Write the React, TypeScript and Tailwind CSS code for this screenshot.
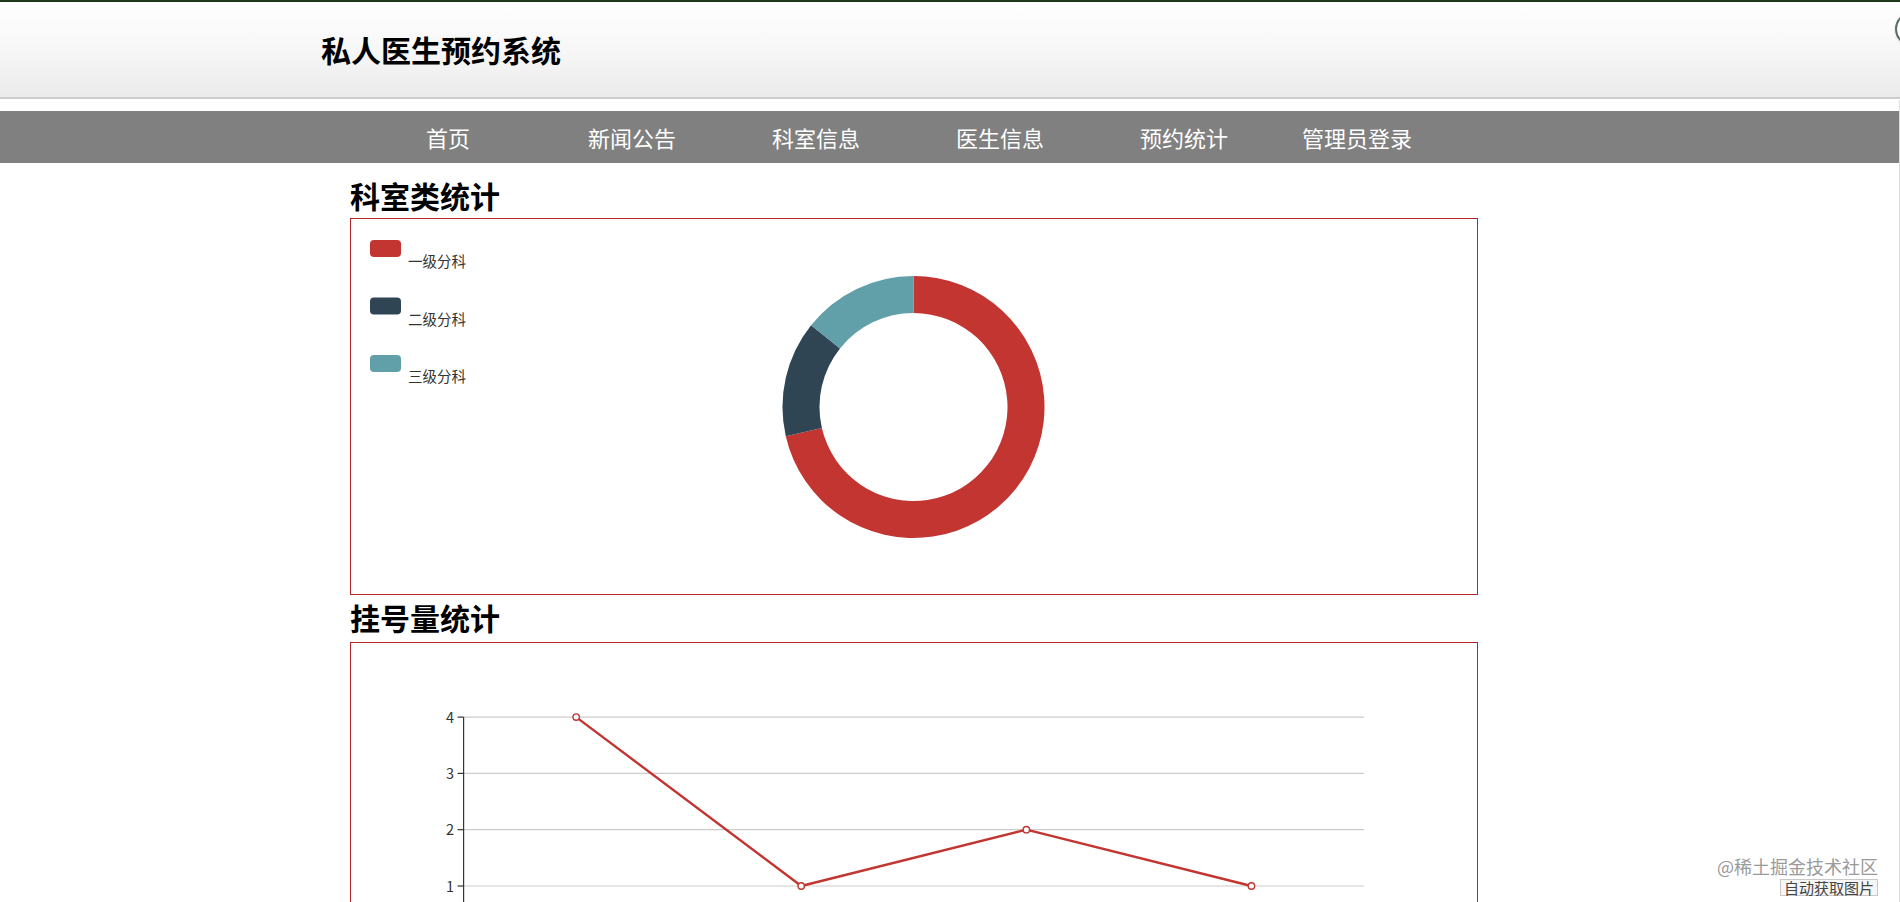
import React from "react";

const NAV = [
  { label: "首页", w: "w-[184px]" },
  { label: "新闻公告", w: "w-[184px]" },
  { label: "科室信息", w: "w-[184px]" },
  { label: "医生信息", w: "w-[184px]" },
  { label: "预约统计", w: "w-[184px]" },
  { label: "管理员登录", w: "w-[162px]" },
];

const PIE = [
  { name: "一级分科", value: 5, color: "#c23531" },
  { name: "二级分科", value: 1, color: "#2f4554" },
  { name: "三级分科", value: 1, color: "#61a0a8" },
];

const LINE = [4, 1, 2, 1];

const FONT = "'Noto Sans CJK SC', 'Liberation Sans', sans-serif";

// angle in degrees, measured clockwise from 12 o'clock
function pt(cx: number, cy: number, rad: number, a: number) {
  const t = (a * Math.PI) / 180;
  return `${(cx + rad * Math.sin(t)).toFixed(2)} ${(cy - rad * Math.cos(t)).toFixed(2)}`;
}

function ringSlice(cx: number, cy: number, R: number, r: number, a0: number, a1: number) {
  const large = a1 - a0 > 180 ? 1 : 0;
  return [
    `M ${pt(cx, cy, R, a0)}`,
    `A ${R} ${R} 0 ${large} 1 ${pt(cx, cy, R, a1)}`,
    `L ${pt(cx, cy, r, a1)}`,
    `A ${r} ${r} 0 ${large} 0 ${pt(cx, cy, r, a0)}`,
    "Z",
  ].join(" ");
}

function DeptChart() {
  const total = PIE.reduce((s, d) => s + d.value, 0);
  let acc = 0;
  const slices = PIE.map((d) => {
    const a0 = (acc / total) * 360;
    acc += d.value;
    const a1 = (acc / total) * 360;
    return { ...d, path: ringSlice(562.5, 188, 131, 94, a0, a1) };
  });
  return (
    <svg width="1126" height="375" className="block">
      {PIE.map((d, i) => (
        <g key={d.name}>
          <rect x="19" y={21 + i * 57.5} width="31" height="17" rx="4" fill={d.color} />
          <text
            x="57"
            y={41.5 + i * 57.5}
            fontSize="14.5"
            fill="#333"
            dominantBaseline="central"
            fontFamily={FONT}
          >
            {d.name}
          </text>
        </g>
      ))}
      {slices.map((s) => (
        <path key={s.name} d={s.path} fill={s.color} />
      ))}
    </svg>
  );
}

function RegisterChart() {
  const left = 112.6;
  const right = 1013;
  const base = 299.3;
  const step = 56.3;
  const band = (right - left) / LINE.length;
  const yFor = (v: number) => base - v * step;
  const xFor = (i: number) => left + band / 2 + i * band;
  const points = LINE.map((v, i) => `${xFor(i)},${yFor(v)}`).join(" ");
  return (
    <svg width="1126" height="375" className="block">
      {[1, 2, 3, 4].map((v) => (
        <g key={v}>
          <line x1={left} x2={right} y1={yFor(v)} y2={yFor(v)} stroke="#cccccc" strokeWidth="1.2" />
          <line x1={left - 6} x2={left} y1={yFor(v)} y2={yFor(v)} stroke="#333" strokeWidth="1.2" />
          <text
            x="103"
            y={yFor(v) - 1}
            fontSize="14.5"
            fill="#333"
            textAnchor="end"
            dominantBaseline="central"
            fontFamily={FONT}
          >
            {v}
          </text>
        </g>
      ))}
      <line x1={left} x2={left} y1={yFor(4)} y2={base} stroke="#333" strokeWidth="1.2" />
      <line x1={left} x2={right} y1={base} y2={base} stroke="#333" strokeWidth="1.2" />
      <polyline points={points} fill="none" stroke="#c23531" strokeWidth="2.4" strokeLinejoin="round" />
      {LINE.map((v, i) => (
        <circle key={i} cx={xFor(i)} cy={yFor(v)} r="3.2" fill="#fff" stroke="#c23531" strokeWidth="1.4" />
      ))}
    </svg>
  );
}

export default function App() {
  return (
    <div className="relative h-[902px] overflow-hidden bg-white font-['Noto_Sans_CJK_SC','Liberation_Sans',sans-serif] text-black">
      <div className="h-[2px] bg-[#1d3b1a]" />
      <header className="flex h-[97px] items-center border-b-2 border-[#cdcdcd] bg-linear-to-b from-white via-[#f7f7f7] to-[#ebebeb] pl-[321px] pb-[1px]">
        <h1 className="text-[30px] font-bold leading-none">私人医生预约系统</h1>
      </header>

      <nav className="mt-[12px] flex h-[52px] items-center bg-[#808080] pl-[356px]">
        {NAV.map((n) => (
          <a key={n.label} className={`${n.w} text-center text-[22px] leading-none text-white`}>
            {n.label}
          </a>
        ))}
      </nav>

      <main className="ml-[350px] flex w-[1128px] flex-col">
        <h2 className="mt-[17px] mb-[8px] h-[30px] text-[30px] font-bold leading-[30px]">科室类统计</h2>
        <section className="h-[377px] border border-[#b3282d]">
          <DeptChart />
        </section>

        <h2 className="mt-[7px] mb-[10px] h-[30px] text-[30px] font-bold leading-[30px]">挂号量统计</h2>
        <section className="h-[377px] border border-[#b3282d]">
          <RegisterChart />
        </section>
      </main>

      {/* floating bits from the capture */}
      <div className="absolute left-[1895px] top-[12px] h-[34px] w-[34px] rounded-full border-2 border-[#5b6f68] bg-white shadow" />
      <div className="absolute right-0 top-[100px] bottom-0 w-px bg-[#dddddd]" />

      <div className="absolute right-[22px] bottom-[6px] flex flex-col items-end">
        <span className="mb-[4px] text-[18px] leading-none text-[#9a9a9a]">@稀土掘金技术社区</span>
        <span className="border border-[#c8c8c8] bg-[#f6f6f6] px-[3px] text-[15px] leading-[15px] text-[#444]">
          自动获取图片
        </span>
      </div>
    </div>
  );
}
